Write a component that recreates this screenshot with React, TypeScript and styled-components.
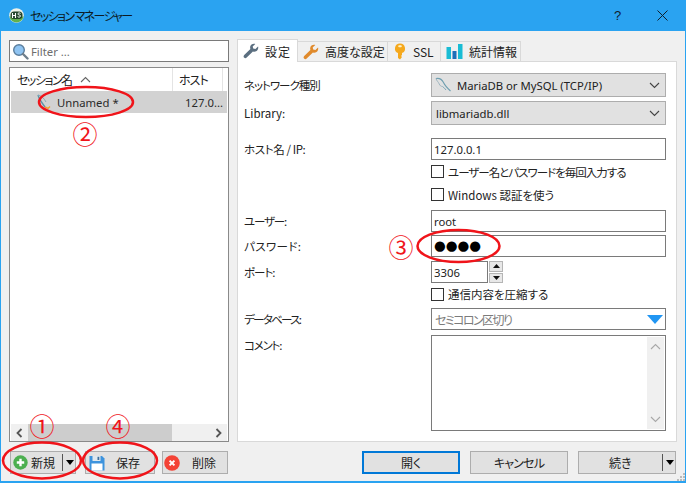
import React from "react";
import styled, { createGlobalStyle } from "styled-components";

const Global = createGlobalStyle`
  html, body { margin: 0; padding: 0; background: #f0f0f0; }
  body { font-family: "Noto Sans", "Noto Sans CJK JP", sans-serif; font-size: 11.3px; color: #1a1a1a; font-feature-settings: "palt"; }
  * { box-sizing: border-box; }
`;

const Win = styled.div`
  position: relative; width: 686px; height: 483px; overflow: hidden; background: #f0f0f0;
  border-left: 1px solid #2aa3f1; border-right: 1px solid #2aa3f1;
  display: flex; flex-direction: column;
`;
const TitleBar = styled.div`
  height: 31px; flex: none; margin: 0 -1px; background: #2aa3f1; display: flex; align-items: center;
  padding-left: 9px; color: #0c1a24; font-size: 12px;
  font-family: "Noto Sans CJK JP", sans-serif;
`;
const TitleText = styled.span` margin-left: 6px; flex: 1; letter-spacing: -1.6px; `;
const TitleBtn = styled.span`
  width: 45px; display: flex; justify-content: center; align-items: center; color: #10202c; font-size: 13px;
  font-family: "Liberation Sans", sans-serif; margin-right: ${p => p.$mr ?? 0}px;
`;
const Body = styled.div`
  flex: 1; display: flex; flex-direction: column; padding: 8px 8px 0 8px; min-height: 0;
`;
const Columns = styled.div` display: flex; gap: 8px; height: 403px; `;
const Left = styled.div` width: 220px; display: flex; flex-direction: column; gap: 5px; `;
const Right = styled.div` width: 440px; display: flex; flex-direction: column; `;

const Filter = styled.div`
  height: 22px; margin-top: 1px; background: #fff; border: 1px solid #7a7a7a; display: flex; align-items: center; gap: 2px; padding-left: 2px; color: #6d6d6d;
`;
const List = styled.div`
  flex: 1; background: #fff; border: 1px solid #8a8a8a; display: flex; flex-direction: column; padding: 0 1px;
`;
const ListHead = styled.div`
  height: 23px; display: flex; flex: none; font-family: "Noto Sans CJK JP", sans-serif; font-size: 12px; background: #fff;
`;
const HeadCell = styled.div`
  width: ${p => p.$w}px; flex: none; display: flex; align-items: center; gap: 8px; padding-left: ${p => p.$pl}px; border-right: 1px solid #e4e4e4; color: #222; letter-spacing: ${p => p.$ls ?? 0}px;
`;
const ListRow = styled.div`
  height: 22px; flex: none; background: #d2d2d2; display: flex; align-items: center; color: #2a2a2a;
`;
const Cell = styled.span`
  width: ${p => p.$w}px; flex: none; padding-left: ${p => p.$pl}px; display: flex; align-items: center; gap: ${p => p.$gap ?? 0}px;
`;
const ListFill = styled.div` flex: 1; `;
const HScroll = styled.div`
  height: 17px; flex: none; background: #f0f0f0; display: flex; align-items: stretch;
`;
const ScrollBtn = styled.div` width: 17px; flex: none; display: flex; align-items: center; justify-content: center; `;
const Thumb = styled.div` width: 144px; background: #cdcdcd; `;
const Track = styled.div` flex: 1; `;

const Tabs = styled.div` height: 23px; display: flex; align-items: flex-end; position: relative; z-index: 1; margin-bottom: -1px; flex: none; `;
const Tab = styled.div`
  height: ${p => (p.$active ? 23 : 21)}px; display: flex; align-items: center; gap: 6px; background: ${p => (p.$active ? "#fff" : "#f0f0f0")};
  border: 1px solid #d9d9d9; border-bottom: ${p => (p.$active ? "none" : "1px solid #d9d9d9")};
  border-left: ${p => (p.$first ? "1px solid #d9d9d9" : "none")}; white-space: nowrap;
  padding: 0 0 0 5px; width: ${p => p.$w}px; font-size: 12px; font-family: "Noto Sans CJK JP", sans-serif; color: #222; letter-spacing: ${p => p.$ls ?? 0}px;
`;
const Panel = styled.div`
  flex: 1; background: #fff; border: 1px solid #d9d9d9; padding: 11px 10px 0 6px; display: flex; flex-direction: column;
`;
const Row = styled.div`
  display: grid; grid-template-columns: 187px 235px; align-items: center; height: ${p => p.$h ?? 22}px; margin-top: ${p => p.$mt ?? 0}px; flex: none;
`;
const Label = styled.div`
  font-family: "Noto Sans CJK JP", sans-serif; font-size: 11.5px; color: #222; align-self: ${p => (p.$top ? "start" : "center")}; padding-top: ${p => (p.$top ? 2 : 0)}px; letter-spacing: ${p => p.$ls ?? 0}px;
`;
const Select = styled.div`
  height: 100%; background: #e1e1e1; border: 1px solid #adadad; display: flex; align-items: center; padding: 0 5px 0 3px; gap: 4px; color: #222;
`;
const Grow = styled.span` flex: 1; padding-left: 1px; `;
const Input = styled.div`
  height: 100%; background: #fff; border: 1px solid #7a7a7a; display: flex; align-items: center; padding-left: 2px; color: #222;
`;
const Dots = styled.span` font-size: 13.5px; color: #000; line-height: 1; font-family: "DejaVu Sans", sans-serif; `;
const Port = styled.div` display: flex; height: 100%; gap: 1px; `;
const PortInput = styled(Input)` width: 57px; `;
const Spin = styled.div` display: flex; flex-direction: column; gap: 1px; width: 14px; `;
const SpinBtn = styled.div`
  flex: 1; background: #e8e8e8; border: 1px solid #b5b5b5; display: flex; align-items: center; justify-content: center;
`;
const Check = styled.div` display: flex; align-items: center; gap: 4px; font-family: "Noto Sans CJK JP", sans-serif; font-size: 11.5px; color: #222; letter-spacing: ${p => p.$ls ?? 0}px; `;
const Box = styled.span` width: 13px; height: 13px; background: #fff; border: 1px solid #333; flex: none; `;
const Combo = styled(Input)` justify-content: space-between; padding: 0 2px 0 3px; color: #7b7b7b; font-family: "Noto Sans CJK JP", sans-serif; font-size: 12px; letter-spacing: -1.6px; `;
const Memo = styled.div` height: 100%; background: #fff; border: 1px solid #7a7a7a; display: flex; justify-content: flex-end; padding: 1px; `;
const VScroll = styled.div` width: 17px; background: #f0f0f0; display: flex; flex-direction: column; justify-content: space-between; align-items: center; padding: 6px 0; `;

const Footer = styled.div` display: flex; align-items: center; height: 23px; margin-top: 9px; padding-left: 1px; `;
const Btn = styled.div`
  width: ${p => p.$w}px; height: 23px; margin-left: ${p => p.$ml ?? 0}px; background: #e1e1e1; border: ${p => (p.$primary ? "2px solid #0078d7" : "1px solid #adadad")};
  display: flex; align-items: center; font-family: "Noto Sans CJK JP", sans-serif; font-size: 12px; color: #222; padding-left: ${p => p.$pl ?? 0}px; justify-content: ${p => (p.$center ? "center" : "flex-start")}; letter-spacing: ${p => p.$ls ?? 0}px;
`;
const BtnLabel = styled.span` margin-left: ${p => p.$ml ?? 0}px; `;
const Split = styled.span` margin-left: auto; display: flex; align-items: center; height: 100%; `;
const SplitBar = styled.span` width: 1px; height: 17px; background: #555; margin-right: 3px; `;
const SplitCaret = styled.span` width: 0; height: 0; border-left: 4.5px solid transparent; border-right: 4.5px solid transparent; border-top: 5px solid #000; margin-right: 1px; `;

const Overlay = styled.svg` position: absolute; left: -1px; top: 0; pointer-events: none; z-index: 5; `;
const Num = styled.span`
  position: absolute; left: ${p => p.$x}px; top: ${p => p.$y}px; z-index: 6; color: #f0141a; font-size: 25px; line-height: 28px; width: 28px; text-align: center;
  font-family: "Noto Sans CJK JP", sans-serif; font-feature-settings: normal;
`;
const Grip = styled.svg` position: absolute; right: 0; bottom: 2px; `;
const BottomLine = styled.div` position: absolute; left: -1px; right: -1px; bottom: 0; height: 2px; background: #2aa3f1; `;

const Logo = () => (
  <svg width="15" height="15" viewBox="0 0 15 15">
    <circle cx="7.5" cy="7.5" r="7.3" fill="#eef3ea" />
    <path d="M.4 8.5a7.2 7.2 0 0 0 14.2 0z" fill="#62b04e" />
    <rect x="1.5" y="3.5" width="12" height="7.5" rx="3.5" fill="#23452b" />
    <path d="M3.5 5v5M3.5 7.5h3M6.5 5v5" stroke="#fff" strokeWidth="1.1" fill="none" />
    <path d="M11.5 5.4c-1-.8-2.8-.5-2.6.7.2 1 2.8.7 2.6 2-.2 1.3-2.1 1.2-2.9.5" stroke="#fff" strokeWidth="1" fill="none" />
  </svg>
);
const Search = () => (
  <svg width="17" height="17" viewBox="0 0 17 17">
    <circle cx="7" cy="7" r="5.3" fill="#8fc4f2" stroke="#5a7d9c" strokeWidth="1.4" />
    <path d="M11 11l4.5 4.5" stroke="#6f7f8c" strokeWidth="2.4" strokeLinecap="round" />
  </svg>
);
const Wrench = ({ c }: { c: string }) => (
  <svg width="16" height="16" viewBox="0 0 16 16">
    <path d="M15 3.6l-2.6 2.5-2.2-.5-.5-2.2L12.3.9c-1.9-.6-4 .1-4.8 1.8-.5 1.1-.5 2.2-.1 3.2L1.2 12c-.8.8-.8 1.900-.1 2.600.7.7 1.8.7 2.600 0l6.200-6.200c1 .4 2.200.4 3.200-.1 1.700-.8 2.500-2.800 2-4.700z" fill={c} />
  </svg>
);
const Key = () => (
  <svg width="14" height="17" viewBox="0 0 14 17">
    <path d="M7 .5a5 5 0 0 1 2 9.6V12l-1 1 1 1-2 2.5L5 15V10.1A5 5 0 0 1 7 .5z" fill="#f5a81c" />
    <rect x="5.2" y="2.2" width="3.6" height="2" rx="1" fill="#fff3c8" />
  </svg>
);
const Bars = () => (
  <svg width="17" height="17" viewBox="0 0 17 17">
    <rect x=".5" y="4" width="4.5" height="12" fill="#19bcd4" />
    <rect x="6.5" y="8" width="4" height="8" fill="#1d6fb8" />
    <rect x="12" y="1" width="4.5" height="15" fill="#19bcd4" />
  </svg>
);
const Dolphin = () => (
  <svg width="17" height="17" viewBox="0 0 17 17" fill="none">
    <path d="M1 1.5c3-.6 6 1 7.5 4 1 2.2 3.4 5.200 7 8.500" stroke="#6f9fb0" strokeWidth="1.1" />
    <path d="M1 1.5c.6 2.400 2.300 3.200 3.200 5.400.7 1.800 1.800 2.500 3.200 2.600" stroke="#9fb6c0" strokeWidth="1" />
    <path d="M7.5 9.5c1.5.8 2.5 2.400 3.500 3.500" stroke="#7fa8b8" strokeWidth="1" />
  </svg>
);
const RowIcon = () => (
  <svg width="16" height="17" viewBox="0 0 16 17" fill="none">
    <path d="M1 1c1 4 4 8 7 12" stroke="#5d93a8" strokeWidth="1.4" />
    <path d="M1 1c3 .5 6 3 8 7" stroke="#88aab8" strokeWidth="1" />
    <path d="M8 13l3 1.5 2-2" stroke="#f0a030" strokeWidth="1.4" />
  </svg>
);
const Plus = () => (
  <svg width="15" height="15" viewBox="0 0 15 15">
    <circle cx="7.5" cy="7.5" r="7.2" fill="#4caf50" />
    <path d="M7.5 3.8v7.4M3.8 7.5h7.4" stroke="#fff" strokeWidth="2.4" />
  </svg>
);
const Floppy = () => (
  <svg width="16" height="16" viewBox="0 0 16 16">
    <path d="M.5 1h12.5l2.500 2.500V15.500H.5z" fill="#3d93dd" />
    <rect x="3.5" y="1" width="8" height="5" fill="#dfe8ee" />
    <rect x="8.5" y="1.8" width="1.8" height="3.2" fill="#3d6f9c" />
    <rect x="2.5" y="8.5" width="11" height="7" fill="#fff" />
  </svg>
);
const Del = () => (
  <svg width="16" height="16" viewBox="0 0 16 16">
    <circle cx="8" cy="8" r="7.8" fill="#f44336" />
    <path d="M5.6 5.6l4.8 4.8M10.4 5.6l-4.8 4.8" stroke="#fff" strokeWidth="2" />
  </svg>
);
const Chev = ({ c = "#444", up = false }: { c?: string; up?: boolean }) => (
  <svg width="11" height="7" viewBox="0 0 11 7" fill="none">
    <path d={up ? "M1 6l4.5-4.5L10 6" : "M1 1l4.5 4.5L10 1"} stroke={c} strokeWidth="1.1" />
  </svg>
);
const Side = ({ left }: { left?: boolean }) => (
  <svg width="7" height="10" viewBox="0 0 7 10" fill="none">
    <path d={left ? "M5.5 1L1.5 5l4 4" : "M1.5 1l4 4-4 4"} stroke="#555" strokeWidth="1.8" />
  </svg>
);
const Tri = ({ up }: { up?: boolean }) => (
  <svg width="7" height="4" viewBox="0 0 7 4"><path d={up ? "M0 4l3.5-4L7 4z" : "M0 0l3.5 4L7 0z"} fill="#111" /></svg>
);

export default function App() {
  return (
    <Win>
      <Global />
      <TitleBar>
        <Logo />
        <TitleText>セッション マネージャー</TitleText>
        <TitleBtn>?</TitleBtn>
        <TitleBtn $mr={1}>
          <svg width="11" height="11" viewBox="0 0 11 11"><path d="M.5.5l10 10M10.5.5l-10 10" stroke="#10202c" fill="none" /></svg>
        </TitleBtn>
      </TitleBar>
      <Body>
        <Columns>
          <Left>
            <Filter><Search />Filter ...</Filter>
            <List>
              <ListHead>
                <HeadCell $w={162} $pl={6} $ls={-1.5}>セッション名 <Chev c="#666" up /></HeadCell>
                <HeadCell $w={50} $pl={6} $ls={-1}>ホスト</HeadCell>
              </ListHead>
              <ListRow>
                <Cell $w={162} $pl={26} $gap={4}><RowIcon />Unnamed *</Cell>
                <Cell $w={50} $pl={12}>127.0...</Cell>
              </ListRow>
              <ListFill />
              <HScroll>
                <ScrollBtn><Side left /></ScrollBtn>
                <Thumb />
                <Track />
                <ScrollBtn><Side /></ScrollBtn>
              </HScroll>
            </List>
          </Left>
          <Right>
            <Tabs>
              <Tab $active $first $w={61} $ls={1}><Wrench c="#5b6f80" />設定</Tab>
              <Tab $w={90}><Wrench c="#e08a2c" />高度な設定</Tab>
              <Tab $w={53}><Key />SSL</Tab>
              <Tab $w={80}><Bars />統計情報</Tab>
            </Tabs>
            <Panel>
              <Row $h={24}>
                <Label $ls={-1}>ネットワーク種別</Label>
                <Select><Dolphin /><Grow>MariaDB or MySQL (TCP/IP)</Grow><Chev /></Select>
              </Row>
              <Row $h={24} $mt={4}>
                <Label>Library:</Label>
                <Select><Grow>libmariadb.dll</Grow><Chev /></Select>
              </Row>
              <Row $h={22} $mt={13}>
                <Label $ls={-0.4}>ホスト名 / IP:</Label>
                <Input>127.0.0.1</Input>
              </Row>
              <Row $h={23}>
                <span />
                <Check $ls={-1}><Box />ユーザー名とパスワードを毎回入力する</Check>
              </Row>
              <Row $h={23}>
                <span />
                <Check><Box />Windows 認証を使う</Check>
              </Row>
              <Row $h={22} $mt={4}>
                <Label $ls={-1.2}>ユーザー:</Label>
                <Input>root</Input>
              </Row>
              <Row $h={22} $mt={3}>
                <Label $ls={0.4}>パスワード:</Label>
                <Input><Dots>●●●●</Dots></Input>
              </Row>
              <Row $h={22} $mt={4}>
                <Label $ls={-1}>ポート:</Label>
                <Port>
                  <PortInput>3306</PortInput>
                  <Spin>
                    <SpinBtn><Tri up /></SpinBtn>
                    <SpinBtn><Tri /></SpinBtn>
                  </Spin>
                </Port>
              </Row>
              <Row $h={22}>
                <span />
                <Check><Box />通信内容を圧縮する</Check>
              </Row>
              <Row $h={22} $mt={3}>
                <Label $ls={-1.7}>データベース:</Label>
                <Combo>セミコロン区切り
                  <svg width="16" height="9" viewBox="0 0 16 9"><path d="M0 0h16L8 9z" fill="#2196f3" /></svg>
                </Combo>
              </Row>
              <Row $h={96} $mt={5}>
                <Label $top $ls={-1.2}>コメント:</Label>
                <Memo>
                  <VScroll><Chev c="#a8a8a8" up /><Chev c="#a8a8a8" /></VScroll>
                </Memo>
              </Row>
            </Panel>
          </Right>
        </Columns>
        <Footer>
          <Btn $w={66} $pl={2}>
            <Plus /><BtnLabel $ml={3}>新規</BtnLabel>
            <Split><SplitBar /><SplitCaret /></Split>
          </Btn>
          <Btn $w={70} $ml={9} $pl={3}>
            <Floppy /><BtnLabel $ml={11}>保存</BtnLabel>
          </Btn>
          <Btn $w={66} $ml={7} $pl={1}>
            <Del /><BtnLabel $ml={12}>削除</BtnLabel>
          </Btn>
          <Btn $w={98} $ml={134} $primary $center>開く</Btn>
          <Btn $w={98} $ml={10} $center $ls={-0.8}>キャンセル</Btn>
          <Btn $w={98} $ml={10} $pl={30}>
            <BtnLabel>続き</BtnLabel>
            <Split><SplitBar /><SplitCaret /></Split>
          </Btn>
        </Footer>
      </Body>
      <BottomLine />
      <Grip width="9" height="9" viewBox="0 0 9 9"><path d="M7 1h2v2H7zM4 4h2v2H4zM7 4h2v2H7zM1 7h2v2H1zM4 7h2v2H4zM7 7h2v2H7z" fill="#bbb" /></Grip>
      <Overlay width="686" height="483" viewBox="0 0 686 483" fill="none" stroke="#f0141a" strokeWidth="2.5">
        <ellipse cx="42" cy="460.5" rx="39" ry="18" />
        <ellipse cx="86" cy="102" rx="47" ry="15" />
        <ellipse cx="458.5" cy="246" rx="41" ry="16" />
        <ellipse cx="120" cy="460.5" rx="37" ry="18" />
      </Overlay>
      <Num $x={27} $y={411}>①</Num>
      <Num $x={70} $y={119}>②</Num>
      <Num $x={386} $y={232}>③</Num>
      <Num $x={103} $y={411}>④</Num>
    </Win>
  );
}
